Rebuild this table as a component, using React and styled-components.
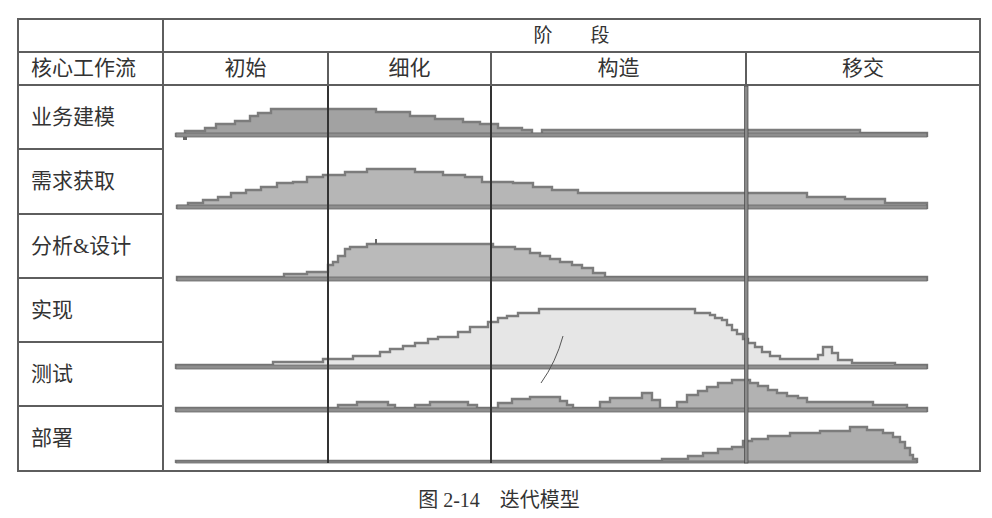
import React from 'react'
import styled, { createGlobalStyle } from 'styled-components'

const GlobalStyle = createGlobalStyle`
  body {
    margin: 0;
    background: #fff;
    color: #333;
    font-family: "Liberation Serif", "Noto Sans CJK SC", serif;
  }
`

const LINE = '#5e5e5e'

const Page = styled.div`
  padding: 18px 0 0 17px;
`

const Figure = styled.figure`
  margin: 0;
  width: 964px;
`

const Table = styled.div`
  display: grid;
  grid-template-columns: 145px 815px;
  grid-template-rows: 33px 33px 384px;
  border: 2px solid ${LINE};
`

const Cell = styled.div`
  display: flex;
  align-items: center;
  justify-content: ${props => props.$left ? 'flex-start' : 'center'};
  padding-left: ${props => props.$left ? '12px' : '0'};
  border-right: ${props => props.$divider ? `2px solid ${LINE}` : 'none'};
  border-bottom: 2px solid ${LINE};
  font-size: ${props => props.$size || 21}px;
  line-height: 1;
`

const PhaseRow = styled.div`
  display: grid;
  grid-template-columns: 163px 163px 255px 1fr;
  border-bottom: 2px solid ${LINE};
`

const PhaseCell = styled.div`
  display: flex;
  align-items: center;
  justify-content: center;
  border-left: ${props => props.$first ? 'none' : `2px solid ${LINE}`};
  font-size: 21px;
  line-height: 1;
`

const FlowColumn = styled.div`
  display: flex;
  flex-direction: column;
  border-right: 2px solid ${LINE};
`

const FlowLabel = styled.div`
  box-sizing: border-box;
  height: ${props => props.$h}px;
  display: flex;
  align-items: center;
  padding-left: 12px;
  border-bottom: ${props => props.$last ? 'none' : `2px solid ${LINE}`};
  font-size: 21px;
  line-height: 1;
`

const Chart = styled.svg`
  display: block;
  width: 815px;
  height: 384px;
`

const Caption = styled.figcaption`
  margin-top: 18px;
  text-align: center;
  font-size: 20px;
  line-height: 20px;
  color: #333;
`

const phases = ['初始', '细化', '构造', '移交']

const labels = [
  ['业务建模', 64],
  ['需求获取', 65],
  ['分析&设计', 64],
  ['实现', 64],
  ['测试', 64],
  ['部署', 63],
]

// each flow: steps [x, topY] from left to right, ends at `end`, shape bottom at `base`
const flows = [
  {
    base: 137, barTop: 133, end: 927, fill: '#a2a2a2',
    steps: [[176, 134], [185, 131], [205, 128], [216, 124], [235, 121], [250, 116], [258, 113], [271, 109],
      [376, 112], [410, 116], [435, 119], [463, 122], [480, 124], [498, 128], [522, 130], [532, 134],
      [542, 130], [860, 133]],
  },
  {
    base: 209, barTop: 205, end: 927, fill: '#b6b6b6',
    steps: [[177, 206], [188, 203], [203, 200], [218, 197], [231, 193], [246, 190], [261, 187], [277, 183],
      [293, 182], [307, 177], [323, 175], [345, 172], [367, 169], [415, 172], [443, 175], [465, 177],
      [482, 182], [513, 183], [533, 187], [552, 190], [578, 193], [807, 197], [845, 199], [885, 203]],
  },
  {
    base: 281, barTop: 277, end: 927, fill: '#bababa',
    steps: [[177, 277], [284, 274], [307, 272], [328, 265], [333, 262], [338, 256], [345, 249], [350, 247],
      [367, 244], [493, 247], [515, 249], [530, 253], [540, 256], [550, 259], [560, 262], [572, 265],
      [582, 268], [593, 273], [605, 277]],
  },
  {
    base: 369, barTop: 365, end: 927, fill: '#e6e6e6',
    steps: [[176, 365], [273, 362], [323, 359], [353, 356], [380, 352], [390, 349], [403, 346], [415, 343],
      [428, 339], [438, 337], [458, 332], [470, 327], [488, 322], [498, 318], [507, 316], [518, 313],
      [539, 309], [695, 313], [710, 315], [715, 318], [722, 320], [727, 325], [732, 330], [737, 334],
      [743, 339], [748, 343], [755, 347], [762, 352], [770, 356], [780, 359], [818, 355], [823, 347],
      [832, 353], [838, 360], [852, 363], [895, 365]],
  },
  {
    base: 412, barTop: 408, end: 927, fill: '#b2b2b2',
    steps: [[176, 408], [338, 405], [357, 402], [388, 405], [395, 408], [415, 405], [430, 402], [468, 405],
      [477, 408], [498, 403], [512, 399], [530, 397], [560, 401], [567, 405], [573, 408], [600, 402],
      [610, 398], [642, 393], [652, 400], [660, 408], [677, 402], [687, 395], [698, 391], [707, 387],
      [718, 383], [732, 380], [750, 383], [758, 386], [768, 390], [777, 393], [787, 396], [798, 398],
      [807, 402], [873, 405], [907, 408]],
  },
  {
    base: 463, barTop: 461, end: 917, fill: '#adadad',
    steps: [[176, 461], [662, 459], [688, 456], [703, 453], [718, 449], [732, 447], [743, 441], [752, 439],
      [768, 436], [790, 433], [820, 431], [850, 427], [867, 430], [883, 433], [893, 437], [900, 442],
      [905, 448], [910, 455], [913, 459]],
  },
]

const stepPath = ({ steps, end, base }) => {
  let d = `M${steps[0][0]} ${base}`
  steps.forEach(([, y], i) => {
    const next = i + 1 < steps.length ? steps[i + 1][0] : end
    d += ` V${y} H${next}`
  })
  return d + ` V${base}`
}

const Flow = ({ flow }) => {
  const d = stepPath(flow)
  const start = flow.steps[0][0]
  return (
    <g>
      <path d={ d + ' Z' } fill={ flow.fill } />
      <path d={ d } fill="none" stroke="#7c7c7c" strokeWidth="2.4" />
      <rect x={ start } y={ flow.barTop } width={ flow.end - start } height={ flow.base - flow.barTop }
        fill="#8e8e8e" stroke="#666" strokeWidth="0.8" />
    </g>
  )
}

const IterationChart = () => (
  <Chart viewBox="164 86 815 384" preserveAspectRatio="none">
    { flows.map((flow, i) => <Flow key={ i } flow={ flow } />) }
    <rect x="375" y="239" width="2" height="5" fill="#666" />
    <rect x="183" y="137" width="4" height="3" fill="#666" />
    <path d="M563 336 Q556 362 541 383" fill="none" stroke="#555" strokeWidth="1" />
    <line x1="328" y1="86" x2="328" y2="463" stroke="#333" strokeWidth="2" />
    <line x1="491" y1="86" x2="491" y2="463" stroke="#333" strokeWidth="2" />
    <rect x="744.5" y="86" width="3.5" height="377" fill="#8a8a8a" stroke="#444" strokeWidth="0.7" />
  </Chart>
)

const App = () => (
  <Page>
    <GlobalStyle />
    <Figure>
      <Table>
        <Cell $divider />
        <Cell $size={ 19 }>阶　　段</Cell>
        <Cell $divider $left>核心工作流</Cell>
        <PhaseRow>
          { phases.map((p, i) => <PhaseCell key={ p } $first={ i === 0 }>{ p }</PhaseCell>) }
        </PhaseRow>
        <FlowColumn>
          { labels.map(([text, h], i) => (
            <FlowLabel key={ text } $h={ h } $last={ i === labels.length - 1 }>{ text }</FlowLabel>
          )) }
        </FlowColumn>
        <IterationChart />
      </Table>
      <Caption>图 2-14　迭代模型</Caption>
    </Figure>
  </Page>
)

export default App
